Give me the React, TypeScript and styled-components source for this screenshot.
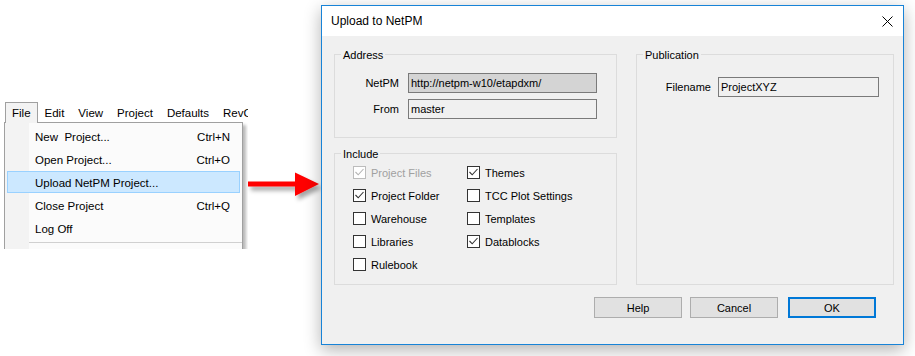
import React from 'react';
import styled, { createGlobalStyle } from 'styled-components';

const Global = createGlobalStyle`
  html, body { margin: 0; padding: 0; background: #fff; }
  body { font-family: "Liberation Sans", Arial, sans-serif; }
`;

const Stage = styled.div`
  width: 915px;
  height: 356px;
  display: flex;
  align-items: flex-start;
  overflow: hidden;
  background: #fff;
`;

/* ---------- left: application menu snapshot ---------- */
const MenuShot = styled.div`
  flex: none;
  width: 248px;
  height: 249px;
  box-sizing: border-box;
  padding: 102px 0 0 4px;
  overflow: hidden;
  font-size: 11.5px;
  color: #000;
`;

const MenuBar = styled.div`
  display: flex;
  height: 20px;
  margin-left: 1px;
`;

const MenuBarItem = styled.div<{ $open?: boolean }>`
  position: relative;
  z-index: 2;
  box-sizing: border-box;
  height: ${p => (p.$open ? '21px' : '20px')};
  padding: 0 6px;
  display: flex;
  align-items: center;
  white-space: nowrap;
  border: 1px solid ${p => (p.$open ? '#a0a0a0' : 'transparent')};
  border-bottom: none;
  background: ${p => (p.$open ? '#f3f3f3' : 'transparent')};
`;

const Dropdown = styled.div`
  position: relative;
  z-index: 1;
  width: 239px;
  box-sizing: border-box;
  border: 1px solid #a0a0a0;
  background: linear-gradient(to right, #f3f3f3 24px, #fbfbfb 24px);
  box-shadow: 3px 3px 3px rgba(0, 0, 0, 0.28);
  padding: 2px 0 30px;
  display: flex;
  flex-direction: column;
  gap: 1px;
`;

const DropItem = styled.div<{ $active?: boolean }>`
  height: 22px;
  box-sizing: border-box;
  margin: 0 2px;
  padding: 1px 9px 0 27px;
  display: flex;
  align-items: center;
  justify-content: space-between;
  white-space: pre;
  border: 1px solid ${p => (p.$active ? '#99d1ff' : 'transparent')};
  background: ${p => (p.$active ? '#cce8ff' : 'transparent')};
`;

const Separator = styled.div`
  height: 1px;
  margin: 2px 0 0 24px;
  background: #d0d0d0;
`;

/* ---------- middle: arrow ---------- */
const ArrowSlot = styled.div`
  flex: none;
  width: 73px;
  padding-top: 168px;
  display: flex;
`;

/* ---------- right: dialog ---------- */
const Dialog = styled.div`
  flex: none;
  margin-top: 5px;
  width: 583px;
  height: 340px;
  box-sizing: border-box;
  border: 1px solid #1883d7;
  background: #f0f0f0;
  box-shadow: 0 5px 16px rgba(0, 0, 0, 0.3);
  display: flex;
  flex-direction: column;
  color: #000;
`;

const TitleBar = styled.div`
  height: 30px;
  flex: none;
  background: #fff;
  display: flex;
  align-items: center;
  justify-content: space-between;
  padding: 0 10px 0 9px;
  font-size: 12px;
`;

const Body = styled.div`
  flex: 1;
  padding: 18px 9px 26px 12px;
  display: flex;
  flex-direction: column;
  font-size: 11px;
`;

const Groups = styled.div`
  display: grid;
  grid-template-columns: 283px 258px;
  grid-template-rows: 84px 132px;
  column-gap: 19px;
  row-gap: 15px;
`;

const GroupBox = styled.div<{ $span?: boolean }>`
  box-sizing: border-box;
  border: 1px solid #dcdcdc;
  display: flex;
  flex-direction: column;
  grid-row: ${p => (p.$span ? '1 / span 2' : 'auto')};
  grid-column: ${p => (p.$span ? '2' : '1')};
`;

const Caption = styled.div`
  align-self: flex-start;
  margin: -6px 0 0 6px;
  padding: 0 2px;
  background: #f0f0f0;
  line-height: 13px;
`;

const FieldGrid = styled.div<{ $label: number; $field: number; $gap: number; $top: number }>`
  display: grid;
  grid-template-columns: ${p => `${p.$label}px ${p.$field}px`};
  grid-auto-rows: 20px;
  column-gap: ${p => p.$gap}px;
  row-gap: 6px;
  margin-top: ${p => p.$top}px;
`;

const FieldLabel = styled.div`
  justify-self: end;
  align-self: center;
  white-space: nowrap;
`;

const TextBox = styled.div<{ $readonly?: boolean }>`
  box-sizing: border-box;
  height: 20px;
  border: 1px solid #7a7a7a;
  background: ${p => (p.$readonly ? '#d4d4d4' : '#f0f0f0')};
  padding: 0 2px;
  line-height: 18px;
  white-space: nowrap;
  overflow: hidden;
`;

const CheckGrid = styled.div`
  display: grid;
  grid-auto-flow: column;
  grid-template-rows: repeat(5, 23px);
  grid-template-columns: 114px auto;
  margin-top: 0;
  padding-left: 18px;
`;

const CheckRow = styled.div<{ $disabled?: boolean }>`
  display: flex;
  align-items: center;
  gap: 5px;
  white-space: nowrap;
  color: ${p => (p.$disabled ? '#a0a0a0' : '#000')};
`;

const Box = styled.div<{ $disabled?: boolean }>`
  width: 13px;
  height: 13px;
  box-sizing: border-box;
  flex: none;
  border: 1px solid ${p => (p.$disabled ? '#bcbcbc' : '#333333')};
  background: #fff;
  display: flex;
`;

const ButtonRow = styled.div`
  display: flex;
  justify-content: flex-end;
  gap: 8px;
  margin-top: 12px;
  padding-right: 18px;
`;

const Button = styled.div<{ $primary?: boolean }>`
  width: 88px;
  height: 21px;
  box-sizing: border-box;
  border: ${p => (p.$primary ? '2px solid #0078d7' : '1px solid #adadad')};
  margin-left: ${p => (p.$primary ? '2px' : '0')};
  background: #e1e1e1;
  display: flex;
  align-items: center;
  justify-content: center;
`;

const Check: React.FC<{ on?: boolean; disabled?: boolean; label: string }> = ({ on, disabled, label }) => (
  <CheckRow $disabled={disabled}>
    <Box $disabled={disabled}>
      {on && (
        <svg width="11" height="11" viewBox="0 0 11 11">
          <polyline
            points="1.5,5 4.2,7.8 9.5,2"
            fill="none"
            stroke={disabled ? '#b4b4b4' : '#333'}
            strokeWidth="1.1"
          />
        </svg>
      )}
    </Box>
    {label}
  </CheckRow>
);

const menuItems: { label: string; key?: string; active?: boolean }[] = [
  { label: 'New  Project...', key: 'Ctrl+N' },
  { label: 'Open Project...', key: 'Ctrl+O' },
  { label: 'Upload NetPM Project...', active: true },
  { label: 'Close Project', key: 'Ctrl+Q' },
  { label: 'Log Off' },
];

export default function App() {
  return (
    <>
      <Global />
      <Stage>
        <MenuShot>
          <MenuBar>
            <MenuBarItem $open>File</MenuBarItem>
            <MenuBarItem>Edit</MenuBarItem>
            <MenuBarItem>View</MenuBarItem>
            <MenuBarItem>Project</MenuBarItem>
            <MenuBarItem>Defaults</MenuBarItem>
            <MenuBarItem>RevC</MenuBarItem>
          </MenuBar>
          <Dropdown>
            {menuItems.map(m => (
              <DropItem key={m.label} $active={m.active}>
                <span>{m.label}</span>
                {m.key && <span>{m.key}</span>}
              </DropItem>
            ))}
            <Separator />
          </Dropdown>
        </MenuShot>

        <ArrowSlot>
          <svg width="80" height="40" viewBox="0 0 80 40" style={{ overflow: 'visible' }}>
            <defs>
              <filter id="sh" x="-20%" y="-40%" width="150%" height="200%">
                <feDropShadow dx="3" dy="4" stdDeviation="2" floodColor="#000" floodOpacity="0.35" />
              </filter>
            </defs>
            <g filter="url(#sh)">
              <rect x="0" y="13.5" width="49" height="5" fill="#ff0000" />
              <polygon points="47,4.5 71,16 47,28" fill="#ff0000" />
            </g>
          </svg>
        </ArrowSlot>

        <Dialog>
          <TitleBar>
            <span>Upload to NetPM</span>
            <svg width="11" height="11" viewBox="0 0 11 11">
              <path d="M0.5 0.5 L10.5 10.5 M10.5 0.5 L0.5 10.5" stroke="#000" strokeWidth="1" />
            </svg>
          </TitleBar>
          <Body>
            <Groups>
              <GroupBox>
                <Caption>Address</Caption>
                <FieldGrid $label={64} $field={189} $gap={9} $top={11}>
                  <FieldLabel>NetPM</FieldLabel>
                  <TextBox $readonly>http://netpm-w10/etapdxm/</TextBox>
                  <FieldLabel>From</FieldLabel>
                  <TextBox>master</TextBox>
                </FieldGrid>
              </GroupBox>
              <GroupBox>
                <Caption>Include</Caption>
                <CheckGrid>
                  <Check on disabled label="Project Files" />
                  <Check on label="Project Folder" />
                  <Check label="Warehouse" />
                  <Check label="Libraries" />
                  <Check label="Rulebook" />
                  <Check on label="Themes" />
                  <Check label="TCC Plot Settings" />
                  <Check label="Templates" />
                  <Check on label="Datablocks" />
                </CheckGrid>
              </GroupBox>
              <GroupBox $span>
                <Caption>Publication</Caption>
                <FieldGrid $label={74} $field={161} $gap={7} $top={15}>
                  <FieldLabel>Filename</FieldLabel>
                  <TextBox>ProjectXYZ</TextBox>
                </FieldGrid>
              </GroupBox>
            </Groups>
            <ButtonRow>
              <Button>Help</Button>
              <Button>Cancel</Button>
              <Button $primary>OK</Button>
            </ButtonRow>
          </Body>
        </Dialog>
      </Stage>
    </>
  );
}
